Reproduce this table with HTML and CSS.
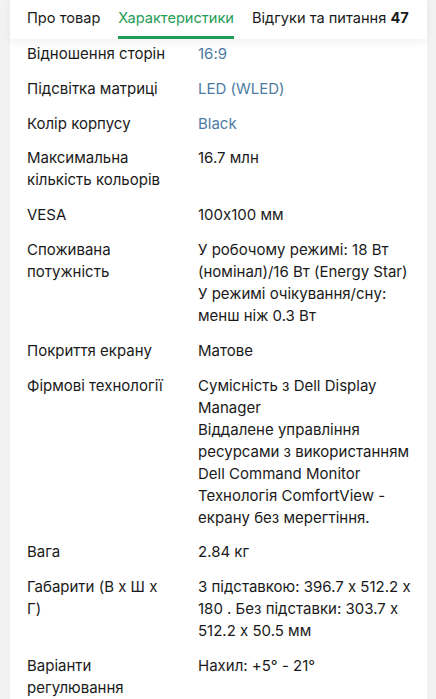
FILE: index.html
```html
<!DOCTYPE html>
<html lang="uk">
<head>
<meta charset="utf-8">
<link rel="stylesheet" href="styles.css">
</head>
<body>
<div class="page">
  <nav class="tabs">
    <span class="tab">Про товар</span>
    <span class="tab active">Характеристики</span>
    <span class="tab">Відгуки та питання <b>47</b></span>
  </nav>
  <div class="specs">
    <div class="label">Відношення сторін</div><div class="value link">16:9</div>
    <div class="label">Підсвітка матриці</div><div class="value link">LED (WLED)</div>
    <div class="label">Колір корпусу</div><div class="value link">Black</div>
    <div class="label">Максимальна кількість кольорів</div><div class="value">16.7 млн</div>
    <div class="label">VESA</div><div class="value">100x100 мм</div>
    <div class="label">Споживана потужність</div><div class="value">У робочому режимі: 18 Вт (номінал)/16 Вт (Energy Star)<br>У режимі очікування/сну: менш ніж 0.3 Вт</div>
    <div class="label">Покриття екрану</div><div class="value">Матове</div>
    <div class="label">Фірмові технології</div><div class="value">Сумісність з Dell Display Manager<br>Віддалене управління ресурсами з використанням Dell Command Monitor<br>Технологія ComfortView - екрану без мерегтіння.</div>
    <div class="label">Вага</div><div class="value">2.84 кг</div>
    <div class="label">Габарити (В х Ш х Г)</div><div class="value">З підставкою: 396.7 х 512.2 х 180 . Без підставки: 303.7 х 512.2 х 50.5 мм</div>
    <div class="label">Варіанти регулювання</div><div class="value">Нахил: +5° - 21°</div>
  </div>
</div>
</body>
</html>
```

FILE: styles.css
```css
html, body {
  margin: 0;
  padding: 0;
  background: #f2f2f2;
  height: 100%;
  overflow: hidden;
}
body {
  font-family: Inter, "Noto Sans", sans-serif;
  font-feature-settings: "calt" 0;
  color: #1a1a1a;
  font-size: 15px;
}
.page {
  margin: 0 9px 0 10px;
  background: #ffffff;
  min-height: 100%;
}
.tabs {
  display: flex;
  gap: 18px;
  padding: 0 17px;
  height: 39px;
  background: #fff;
  box-shadow: 0 3px 8px rgba(0,0,0,0.06);
  position: relative;
  z-index: 1;
}
.tab {
  line-height: 36px;
  font-size: 14.6px;
  white-space: nowrap;
  border-bottom: 3px solid transparent;
}
.tab.active {
  color: #1f9d55;
  border-bottom-color: #1f9d55;
}
.tab b {
  font-weight: 700;
}
.specs {
  display: grid;
  grid-template-columns: 145px 1fr;
  column-gap: 26px;
  row-gap: 12.8px;
  padding: 4px 8px 0 17px;
  line-height: 22px;
}
.link {
  color: #4d7ba3;
}
```
